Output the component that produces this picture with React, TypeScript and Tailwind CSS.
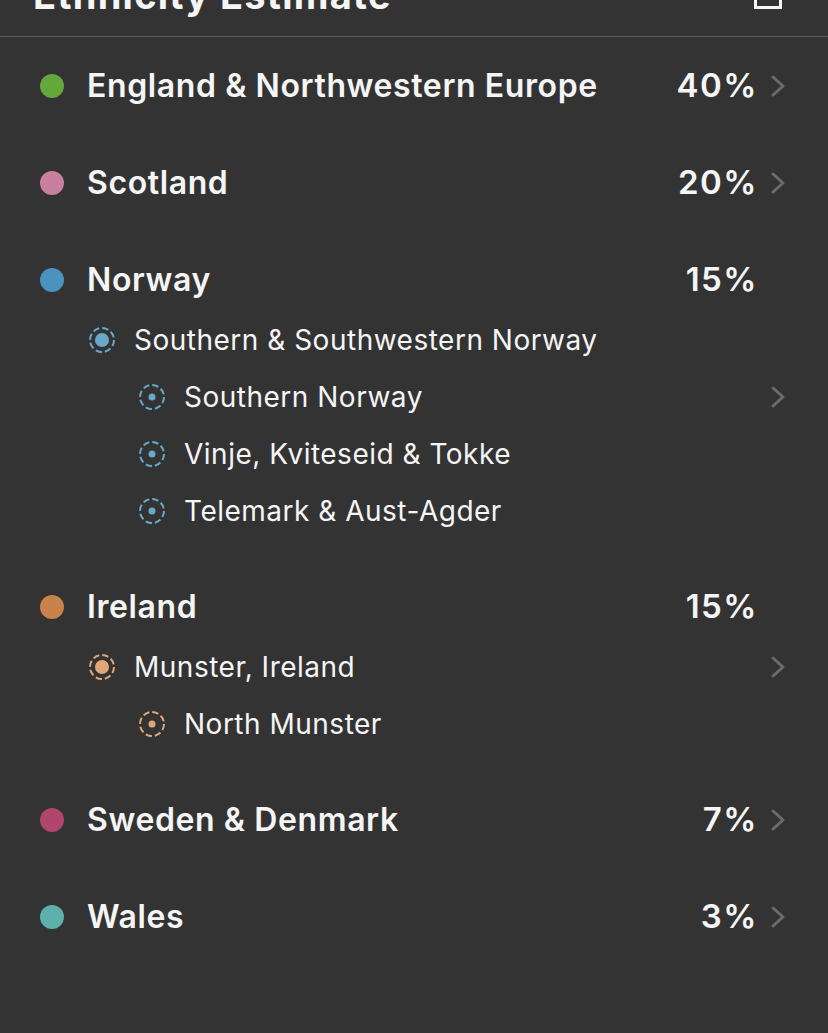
import React from "react";

type Sub = { name: string; level: 1 | 2; chevron?: boolean };
type Group = { name: string; pct: string; color: string; sub?: string; chevron: boolean; subs?: Sub[] };

const groups: Group[] = [
  { name: "England & Northwestern Europe", pct: "40%", color: "#64a73b", chevron: true },
  { name: "Scotland", pct: "20%", color: "#c9809e", chevron: true },
  {
    name: "Norway",
    pct: "15%",
    color: "#4a93bd",
    sub: "#68a9c9",
    chevron: false,
    subs: [
      { name: "Southern & Southwestern Norway", level: 1 },
      { name: "Southern Norway", level: 2, chevron: true },
      { name: "Vinje, Kviteseid & Tokke", level: 2 },
      { name: "Telemark & Aust-Agder", level: 2 },
    ],
  },
  {
    name: "Ireland",
    pct: "15%",
    color: "#c9824a",
    sub: "#e0a677",
    chevron: false,
    subs: [
      { name: "Munster, Ireland", level: 1, chevron: true },
      { name: "North Munster", level: 2 },
    ],
  },
  { name: "Sweden & Denmark", pct: "7%", color: "#b0466b", chevron: true },
  { name: "Wales", pct: "3%", color: "#5eb0aa", chevron: true },
];

function Chevron() {
  return (
    <svg width="16" height="28" viewBox="0 0 16 28" fill="none">
      <path d="M3 5 L13 14 L3 23" stroke="#6b6b6d" strokeWidth="3" strokeLinecap="round" strokeLinejoin="round" />
    </svg>
  );
}

function RingIcon({ color, level }: { color: string; level: 1 | 2 }) {
  return (
    <svg width="28" height="28" viewBox="0 0 28 28" fill="none">
      <circle cx="14" cy="14" r="12" stroke={color} strokeWidth="2" strokeDasharray="6.4 3" />
      <circle cx="14" cy="14" r={level === 1 ? 7 : 3.5} fill={color} />
    </svg>
  );
}

export default function App() {
  return (
    <div
      className="w-[828px] h-[1033px] bg-[#333333] text-[#f5f5f5] overflow-hidden"
      style={{ fontFamily: "Inter, 'Noto Sans', sans-serif" }}
    >
      <div className="h-[37px] border-b border-[#5a5a5a] overflow-hidden">
        <div className="flex justify-between items-start mt-[-27px] pl-[33px] pr-[46px]">
          <div className="text-[38px] leading-[44px] font-bold tracking-[1.3px]">Ethnicity Estimate</div>
          <div className="w-[28px] h-[36px] border-[3px] border-[#f5f5f5]" />
        </div>
      </div>
      <div className="flex flex-col">
        {groups.map((g) => (
          <div key={g.name} className="pt-[19px] pb-[18px] flex flex-col">
            <div className="h-[60px] flex items-center pl-[40px] pr-[42px]">
              <div className="w-[24px] h-[24px] rounded-full" style={{ backgroundColor: g.color }} />
              <div className="ml-[23px] flex-1 text-[32px] font-semibold tracking-[0.6px]">{g.name}</div>
              <div className="text-[33px] font-semibold tracking-[1.5px] mr-[-3px]">{g.pct}</div>
              <div className="w-[31px] flex justify-end">{g.chevron ? <Chevron /> : null}</div>
            </div>
            {g.subs ? (
              <div className="pt-[1px] pb-[1px] flex flex-col">
                {g.subs.map((s) => (
                  <div
                    key={s.name}
                    className={`h-[57px] flex items-center pr-[42px] ${s.level === 1 ? "pl-[88px]" : "pl-[138px]"}`}
                  >
                    <RingIcon color={g.sub!} level={s.level} />
                    <div className="ml-[18px] flex-1 text-[28px] font-normal tracking-[0.5px]">{s.name}</div>
                    <div className="w-[31px] flex justify-end">{s.chevron ? <Chevron /> : null}</div>
                  </div>
                ))}
              </div>
            ) : null}
          </div>
        ))}
      </div>
    </div>
  );
}
